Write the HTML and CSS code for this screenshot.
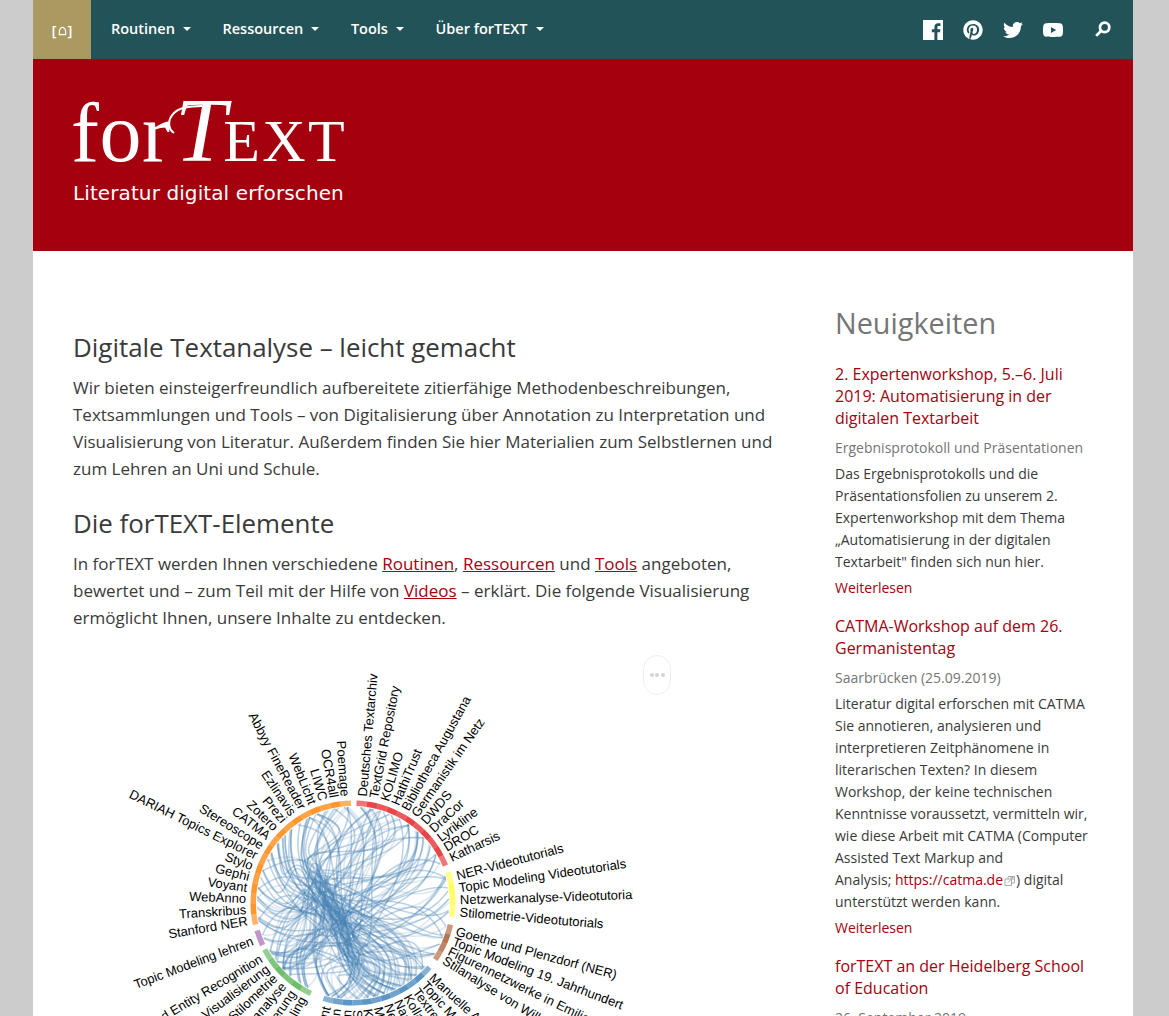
FILE: index.html
```html
<!DOCTYPE html>
<html lang="de">
<head>
<meta charset="utf-8">
<title>forTEXT</title>
<link rel="stylesheet" href="styles.css">
</head>
<body>
<div class="page">
  <nav class="nav">
    <a class="home" href="#"><span>[</span><svg class="home-icon" viewBox="0 0 10 10"><path d="M1.5 9V5.2C1.5 3 3.4 1 5 1s3.500 2 3.500 4.200V9z"/></svg><span>]</span></a>
    <ul class="menu">
      <li><a href="#">Routinen</a></li>
      <li><a href="#">Ressourcen</a></li>
      <li><a href="#">Tools</a></li>
      <li><a href="#">Über forTEXT</a></li>
    </ul>
    <div class="social">
      <svg class="icon" viewBox="0 0 20 20"><path d="M0 0h20v20h-5.6v-7.7H17l.4-3h-3V7.4c0-.9.2-1.4 1.5-1.4h1.6V3.3c-.3 0-1.2-.1-2.3-.1-2.3 0-3.8 1.4-3.8 3.9v2.2H8.8v3h2.6V20H0z"/></svg>
      <svg class="icon" viewBox="0 0 496 512"><path d="M496 256c0 137-111 248-248 248-25.6 0-50.2-3.9-73.4-11.1 10.1-16.5 25.2-43.5 30.8-65 3-11.6 15.4-59 15.4-59 8.1 15.4 31.7 28.5 56.8 28.5 74.8 0 128.7-68.8 128.7-154.3 0-81.9-66.9-143.2-152.9-143.2-107 0-163.9 71.8-163.9 150.1 0 36.4 19.4 81.7 50.3 96.1 4.7 2.2 7.2 1.2 8.3-3.3.8-3.4 5-20.3 6.9-28.1.6-2.5.3-4.7-1.7-7.1-10.1-12.5-18.3-35.3-18.3-56.6 0-54.7 41.4-107.6 112-107.6 60.9 0 103.6 41.5 103.6 100.9 0 67.1-33.9 113.6-78 113.6-24.3 0-42.6-20.1-36.7-44.8 7-29.5 20.5-61.3 20.5-82.6 0-19-10.2-34.9-31.4-34.9-24.9 0-44.9 25.7-44.9 60.2 0 22 7.4 36.8 7.4 36.8s-24.5 103.8-29 123.2c-5 21.4-3 51.6-.9 71.2C65.4 450.9 0 361.1 0 256 0 119 111 8 248 8s248 111 248 248z"/></svg>
      <svg class="icon" viewBox="0 0 512 512"><path d="M459.37 151.716c.325 4.548.325 9.097.325 13.645 0 138.72-105.583 298.558-298.558 298.558-59.452 0-114.68-17.219-161.137-47.106 8.447.974 16.568 1.299 25.34 1.299 49.055 0 94.213-16.568 130.274-44.832-46.132-.975-84.792-31.188-98.112-72.772 6.498.974 12.995 1.624 19.818 1.624 9.421 0 18.843-1.3 27.614-3.573-48.081-9.747-84.143-51.98-84.143-102.985v-1.299c13.969 7.797 30.214 12.67 47.431 13.319-28.264-18.843-46.781-51.005-46.781-87.391 0-19.492 5.197-37.36 14.294-52.954 51.655 63.675 129.3 105.258 216.365 109.807-1.624-7.797-2.599-15.918-2.599-24.04 0-57.828 46.782-104.934 104.934-104.934 30.213 0 57.502 12.67 76.67 33.137 23.715-4.548 46.456-13.32 66.599-25.34-7.798 24.366-24.366 44.833-46.132 57.827 21.117-2.273 41.584-8.122 60.426-16.243-14.292 20.791-32.161 39.308-52.628 54.253z"/></svg>
      <svg class="icon" viewBox="15 64 546 384"><path d="M549.655 124.083c-6.281-23.65-24.787-42.276-48.284-48.597C458.781 64 288 64 288 64S117.22 64 74.629 75.486c-23.497 6.322-42.003 24.947-48.284 48.597-11.412 42.867-11.412 132.305-11.412 132.305s0 89.438 11.412 132.305c6.281 23.65 24.787 41.5 48.284 47.821C117.22 448 288 448 288 448s170.78 0 213.371-11.486c23.497-6.321 42.003-24.171 48.284-47.821 11.412-42.867 11.412-132.305 11.412-132.305s0-89.438-11.412-132.305zm-317.51 213.508V175.185l142.739 81.205-142.739 81.201z"/></svg>
      <svg class="icon-search" viewBox="0 0 16 16"><circle cx="10" cy="6" r="4.4"/><path d="M6.8 9.2 2 14"/></svg>
    </div>
  </nav>

  <header class="banner">
    <div class="logo"><span class="logo-for">for</span><span class="logo-t">T</span><span class="logo-ext">EXT</span><svg class="swash" viewBox="0 0 40 32"><path d="M9 30C3 26 2 17 9 10 15 4 25 3 37 3"/></svg></div>
    <div class="tagline">Literatur digital erforschen</div>
  </header>

  <div class="content">
    <main class="main">
      <h2>Digitale Textanalyse – leicht gemacht</h2>
      <p>Wir bieten einsteigerfreundlich aufbereitete zitierfähige Methodenbeschreibungen, Textsammlungen und Tools – von Digitalisierung über Annotation zu Interpretation und Visualisierung von Literatur. Außerdem finden Sie hier Materialien zum Selbstlernen und zum Lehren an Uni und Schule.</p>
      <h2>Die forTEXT-Elemente</h2>
      <p>In forTEXT werden Ihnen verschiedene <a href="#">Routinen</a>, <a href="#">Ressourcen</a> und <a href="#">Tools</a> angeboten, bewertet und – zum Teil mit der Hilfe von <a href="#">Videos</a> – erklärt. Die folgende Visualisierung ermöglicht Ihnen, unsere Inhalte zu entdecken.</p>
      <div class="chart-wrap">
        <svg id="chart" class="chart" viewBox="0 0 560 560" width="560" height="560"></svg>
        <div class="pill"><i></i><i></i><i></i></div>
      </div>
    </main>

    <aside class="side">
      <h2 class="side-title">Neuigkeiten</h2>
      <article class="news">
        <h3><a href="#">2. Expertenworkshop, 5.–6. Juli 2019: Automatisierung in der digitalen Textarbeit</a></h3>
        <div class="sub">Ergebnisprotokoll und Präsentationen</div>
        <p>Das Ergebnisprotokolls und die Präsentationsfolien zu unserem 2. Expertenworkshop mit dem Thema „Automatisierung in der digitalen Textarbeit" finden sich nun hier.</p>
        <a class="more" href="#">Weiterlesen</a>
      </article>
      <article class="news">
        <h3><a href="#">CATMA-Workshop auf dem 26. Germanistentag</a></h3>
        <div class="sub">Saarbrücken (25.09.2019)</div>
        <p>Literatur digital erforschen mit CATMA<br>Sie annotieren, analysieren und interpretieren Zeitphänomene in literarischen Texten? In diesem Workshop, der keine technischen Kenntnisse voraussetzt, vermitteln wir, wie diese Arbeit mit CATMA (Computer Assisted Text Markup and Analysis;&nbsp;<a class="ext" href="#">https://catma.de<svg class="ext-icon" viewBox="0 0 12 12"><path d="M1 4h6.500v6.500H1zM4 4V1.500h6.500V8H7.500M4 7.500 9 2.500M6.500 2.500H9V5"/></svg></a>) digital unterstützt werden kann.</p>
        <a class="more" href="#">Weiterlesen</a>
      </article>
      <article class="news">
        <h3><a href="#">forTEXT an der Heidelberg School of Education</a></h3>
        <div class="sub">26. September 2019</div>
      </article>
    </aside>
  </div>
</div>
<script src="chart.js"></script>
</body>
</html>
```
FILE: styles.css
```css
html, body { margin: 0; height: 100%; overflow: hidden; }
body { background: #ccc; font-family: "Open Sans", sans-serif; color: #3a3a3a; }
.page { width: 1100px; margin-left: 33px; background: #fff; min-height: 1016px; }

.nav { display: flex; align-items: center; height: 59px; background: #225358; color: #fff; }
.home { width: 58px; height: 59px; background: #aa9960; color: #fff; display: flex; align-items: center; justify-content: center; gap: 1px; text-decoration: none; font-size: 15px; font-weight: 600; }
.home-icon { width: 9px; height: 10px; margin-top: 2px; fill: none; stroke: #fff; stroke-width: 1.3; }
.menu { display: flex; list-style: none; margin: -2px 0 0; padding: 0 0 0 20px; gap: 31.6px; }
.menu a { color: #fff; text-decoration: none; font-size: 14.5px; font-weight: 600; display: flex; align-items: center; }
.menu a::after { content: ""; margin-left: 8px; border-top: 4px solid #fff; border-left: 4px solid transparent; border-right: 4px solid transparent; }
.social { margin-left: auto; padding-right: 22px; display: flex; align-items: center; }
.icon { width: 20px; height: 20px; fill: #fff; margin-right: 20px; }
.icon-search { width: 17px; height: 17px; margin-left: 11px; fill: none; stroke: #fff; stroke-width: 2.6; }

.banner { height: 192px; background: #a5000e; color: #fff; padding: 0 40px; box-sizing: border-box; }
.logo { position: relative; height: 103px; padding-top: 13px; display: flex; align-items: baseline; font-family: "Liberation Serif", serif; line-height: 116px; white-space: nowrap; }
.logo-for { font-size: 84px; letter-spacing: .5px; margin-left: -2px; }
.logo-t { font-size: 92px; font-style: italic; margin-left: 4.5px; margin-right: -3px; }
.logo-ext { font-size: 60px; letter-spacing: 2.5px; }
.swash { position: absolute; left: 92px; top: 44px; width: 40px; height: 32px; fill: none; stroke: #fff; stroke-width: 2; }
.tagline { font-family: "DejaVu Sans", sans-serif; font-size: 20px; line-height: 24px; margin-top: 6px; letter-spacing: .1px; }

.content { display: flex; padding: 0 40px; justify-content: space-between; }
.main { width: 700px; padding-top: 78px; font-size: 17px; line-height: 27px; }
.main h2 { font-size: 25.9px; line-height: 36px; font-weight: 400; margin: 0 0 9px; color: #3a3a3a; }
.main p { margin: 0 0 23px; }
.main p:last-of-type { margin-bottom: 0; }
.main a { color: #a5000e; }
.chart-wrap { position: relative; margin-top: 18px; }
.chart { display: block; }
.lbl { font-family: "Liberation Sans", Arial, sans-serif; font-size: 13px; fill: #000; }
.chords path { fill: none; stroke: #4682b4; stroke-width: 1.5; }
.pill { position: absolute; left: 570px; top: 6px; width: 28px; height: 40px; box-sizing: border-box; border: 1px solid #eee; border-radius: 14px; display: flex; align-items: center; justify-content: center; gap: 1.500px; }
.pill i { width: 4px; height: 4px; border-radius: 50%; background: #d4d4d4; }

.side { width: 258px; padding-top: 54px; font-size: 14px; line-height: 22px; }
.side-title { font-size: 28.8px; line-height: 36px; font-weight: 400; color: #757575; margin: 0 0 22px; }
.news { margin-bottom: 16px; }
.news h3 { font-size: 16px; line-height: 22px; font-weight: 400; margin: 0 0 8px; }
.news a { color: #a5000e; text-decoration: none; }
.sub { color: #757575; font-size: 14px; line-height: 22px; margin-bottom: 4px; }
.news p { margin: 0 0 4px; }
.more { display: block; }
.ext-icon { width: 12px; height: 12px; margin-left: 1px; vertical-align: -2px; fill: none; stroke: #aaa; stroke-width: 1; }
```
FILE: chart.js
```js
(function () {
  var NS = "http://www.w3.org/2000/svg";
  var svg = document.getElementById("chart");
  var CX = 280, CY = 254, R0 = 97, R1 = 102.5, RL = 107;

  var groups = [
    { color: "#e41a1c", from: 2, step: 6, labels: ["Deutsches Textarchiv", "TextGrid Repository", "KOLIMO", "HathiTrust", "Bibliotheca Augustana", "Germanistik im Netz", "DWDS", "DraCor", "Lyrikline", "DROC", "Katharsis"] },
    { color: "#ffff33", from: 72, step: 6.5, labels: ["NER-Videotutorials", "Topic Modeling Videotutorials", "Netzwerkanalyse-Videotutorials", "Stilometrie-Videotutorials"] },
    { color: "#a65628", from: 102.5, step: 5.5, labels: ["Goethe und Plenzdorf (NER)", "Topic Modeling 19. Jahrhundert", "Figurennetzwerke in Emilia Galotti", "Stilanalyse von Wilhelm Raabe"] },
    { color: "#377eb8", from: 130, step: 5.6, labels: ["Manuelle Annotation", "Topic Modeling", "Textreuse", "Kollationierung", "Named Entity", "Netzwerke", "Metadaten", "Korpus", "Stilometrie", "Edition", "Transkription", "Sentiment"] },
    { color: "#4daf4a", from: 205, step: 6.2, labels: ["Topic Modeling", "Annotierung", "Netzwerkanalyse", "Stilometrie", "Visualisierung", "Named Entity Recognition"] },
    { color: "#984ea3", from: 245, step: 9, labels: ["Topic Modeling lehren"] },
    { color: "#ff7f00", from: 257.5, step: 5.96, labels: ["Stanford NER", "Transkribus", "WebAnno", "Voyant", "Gephi", "Stylo", "DARIAH Topics Explorer", "Stereoscope", "CATMA", "Zotero", "Prezi", "Ezlinavis", "Abbyy FineReader", "WebLicht", "LIWC", "OCR4all", "Poemage"] }
  ];

  function el(name, attrs, parent) {
    var e = document.createElementNS(NS, name);
    for (var k in attrs) e.setAttribute(k, attrs[k]);
    parent.appendChild(e);
    return e;
  }
  function pt(deg, r) {
    var a = (deg - 90) * Math.PI / 180;
    return [CX + r * Math.cos(a), CY + r * Math.sin(a)];
  }
  function fmt(p) { return p[0].toFixed(1) + " " + p[1].toFixed(1); }

  var nodes = [];
  var targets = [];
  groups.forEach(function (g, gi) {
    g.labels.forEach(function (label, i) {
      var a0 = g.from + i * g.step, a1 = a0 + g.step;
      var mid = (a0 + a1) / 2;
      var node = { g: gi, mid: mid };
      nodes.push(node);
      if (gi === 3 || gi === 4) targets.push(node);
      var p0 = pt(a0, R1), p1 = pt(a1, R1), p2 = pt(a1, R0), p3 = pt(a0, R0);
      var edge = i === 0 || i === g.labels.length - 1;
      el("path", {
        d: "M" + fmt(p0) + "A" + R1 + " " + R1 + " 0 0 1 " + fmt(p1) + "L" + fmt(p2) + "A" + R0 + " " + R0 + " 0 0 0 " + fmt(p3) + "Z",
        fill: g.color,
        "fill-opacity": edge ? 0.6 : (i % 2 ? 0.82 : 0.72)
      }, svg);
      var t = el("text", { "class": "lbl" }, svg);
      t.textContent = label;
      var left = mid > 180;
      t.setAttribute("transform", "rotate(" + (mid - 90).toFixed(2) + " " + CX + " " + CY + ") translate(" + (CX + RL) + " " + CY + ")" + (left ? " rotate(180)" : ""));
      t.setAttribute("text-anchor", left ? "end" : "start");
      t.setAttribute("dy", ".35em");
    });
  });

  var seed = 77;
  function rnd() { seed = (seed * 16807) % 2147483647; return seed / 2147483647; }
  /* each chord leans along the rim towards its partner, then joins a diagonal trunk */
  function lean(from, to) {
    var d = ((to - from) % 360 + 540) % 360 - 180;
    return from + (d > 0 ? 1 : -1) * Math.min(Math.abs(d) * .45, 42);
  }
  var chords = el("g", { "class": "chords" }, svg);
  var count = 0;
  while (count < 130) {
    var a = nodes[Math.floor(rnd() * nodes.length)];
    var b = rnd() < .6 ? targets[Math.floor(rnd() * targets.length)] : nodes[Math.floor(rnd() * nodes.length)];
    if (a.g === b.g) continue;
    var s = pt(a.mid + (rnd() - .5) * 3, R0 - 1), e = pt(b.mid + (rnd() - .5) * 3, R0 - 1);
    var c1 = pt(lean(a.mid, b.mid), R0 * .72), c2 = pt(lean(b.mid, a.mid), R0 * .72);
    var u = rnd();
    var h = [CX - 44 + u * 50 + (rnd() - .5) * 20, CY - 34 + u * 92 + (rnd() - .5) * 20];
    var dx = e[0] - s[0], dy = e[1] - s[1], len = Math.sqrt(dx * dx + dy * dy) || 1;
    var tx = dx / len * 16 + 6, ty = dy / len * 16 + 10;
    if (dx * 6 + dy * 10 < 0) { tx = dx / len * 16 - 6; ty = dy / len * 16 - 10; }
    var h0 = [h[0] - tx, h[1] - ty], h1 = [h[0] + tx, h[1] + ty];
    el("path", {
      d: "M" + fmt(s) + "C" + fmt(c1) + " " + fmt(h0) + " " + fmt(h) + "C" + fmt(h1) + " " + fmt(c2) + " " + fmt(e),
      "stroke-opacity": rnd() < .6 ? 0.36 : 0.18
    }, chords);
    count++;
  }
})();
```
